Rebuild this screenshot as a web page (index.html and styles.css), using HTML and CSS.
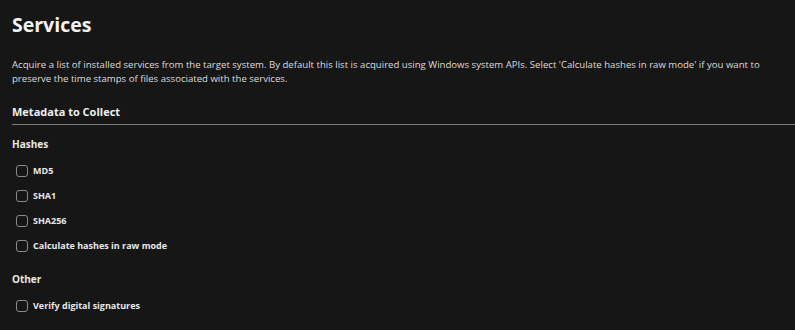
FILE: index.html
```html
<!DOCTYPE html>
<html lang="en">
<head>
    <meta charset="UTF-8">
    <title>Services</title>
    <link rel="stylesheet" href="styles.css">
</head>
<body>

    <!-- Page header -->
    <div class="page">
        <h1 class="page-title">Services</h1>
        <p class="page-desc">Acquire a list of installed services from the target system. By default this list is acquired using Windows system APIs. Select 'Calculate hashes in raw mode' if you want to preserve the time stamps of files associated with the services.</p>

        <!-- Metadata section -->
        <h2 class="section-title">Metadata to Collect</h2>

        <div class="group">
            <div class="group-title">Hashes</div>
            <label class="check-row"><input type="checkbox"><span class="box"></span>MD5</label>
            <label class="check-row"><input type="checkbox"><span class="box"></span>SHA1</label>
            <label class="check-row"><input type="checkbox"><span class="box"></span>SHA256</label>
            <label class="check-row"><input type="checkbox"><span class="box"></span>Calculate hashes in raw mode</label>
        </div>

        <div class="group">
            <div class="group-title">Other</div>
            <label class="check-row"><input type="checkbox"><span class="box"></span>Verify digital signatures</label>
        </div>
    </div>

</body>
</html>
```

FILE: styles.css
```css
/* General */
body {
    margin: 0;
    padding: 0;
    background-color: #161616;
    color: #e6e6e6;
    font-family: "Open Sans", "Noto Sans", sans-serif;
}

.page {
    padding: 9px 0 0 12px;
}

/* Header */
.page-title {
    margin: 0;
    font-size: 19.5px;
    font-weight: 700;
    line-height: 32px;
    color: #f2f2f2;
}

.page-desc {
    margin: 17px 30px 0 0;
    font-size: 9.6px;
    line-height: 14px;
    color: #dcdcdc;
}

/* Section */
.section-title {
    margin: 18px 0 0 0;
    padding-bottom: 4px;
    font-size: 11px;
    font-weight: 700;
    line-height: 16px;
    color: #f0f0f0;
    border-bottom: 1px solid #7a7a7a;
}

.group {
    padding-top: 12px;
}

.group + .group {
    padding-top: 14px;
}

.group-title {
    font-size: 10px;
    font-weight: 700;
    line-height: 14px;
    color: #e8e8e8;
    margin-bottom: 7px;
}

/* Checkbox rows */
.check-row {
    display: flex;
    align-items: center;
    gap: 5px;
    height: 25px;
    padding-left: 4px;
    font-size: 9px;
    font-weight: 700;
    color: #e8e8e8;
}

.check-row input {
    display: none;
}

.check-row .box {
    width: 10px;
    height: 10px;
    border: 1px solid #8a8a8a;
    border-radius: 3px;
}
```
